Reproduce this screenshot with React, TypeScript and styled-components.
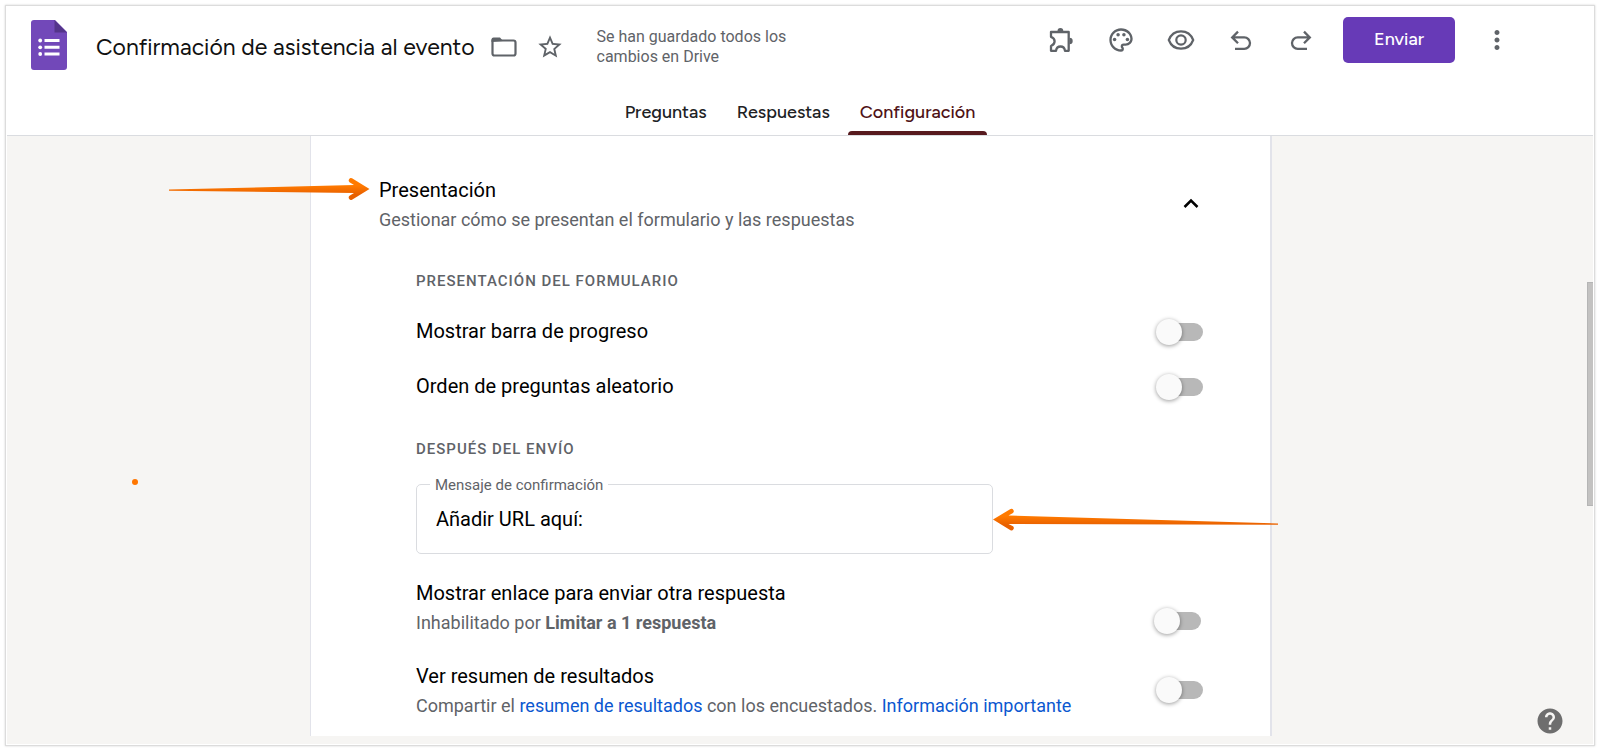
import React, { useId } from "react";
import styled, { createGlobalStyle } from "styled-components";
import { MdMoreVert, MdStarBorder, MdHelp } from "react-icons/md";

const GlobalStyle = createGlobalStyle`
  *, *::before, *::after { box-sizing: border-box; }
  html { background: #fff; }
  body {
    margin: 0;
    background: #fff;
    font-family: Roboto, "Liberation Sans", sans-serif;
    color: #000;
  }
  button { font: inherit; cursor: pointer; }
`;

const display = `Figtree, Inter, "Open Sans", sans-serif`;

const Page = styled.div`
  display: flex;
  min-height: 100vh;
  padding: 5px;
`;

const Frame = styled.div`
  position: relative;
  display: flex;
  flex-direction: column;
  flex: 1;
  min-width: 0;
  padding: 0 1px 1px;
  background: #fff;
  border: 1px solid #dcdcdc;
  box-shadow: 0 0 2px rgba(0, 0, 0, 0.18);
`;

const Header = styled.header`
  display: flex;
  flex-direction: column;
  border-bottom: 1px solid #dadce0;
`;

const TopBar = styled.div`
  display: flex;
  align-items: flex-start;
  justify-content: space-between;
  padding: 11px 66px 0 23px;
  height: 84px;
`;

const Brand = styled.div`
  display: flex;
  align-items: center;
  height: 60px;
`;

const Title = styled.h1`
  margin: 0 0 0 28px;
  font: 400 23px/32px ${display};
  color: #111;
  white-space: nowrap;
`;

const IconButton = styled.button<{ $size?: number }>`
  display: flex;
  align-items: center;
  justify-content: center;
  flex: none;
  width: ${(p) => p.$size ?? 60}px;
  height: 46px;
  padding: 0;
  border: 0;
  background: none;
  color: #5f6368;
`;

const FileActions = styled.div`
  display: flex;
  align-items: center;
  margin: 0 24px 0 6px;
`;

const Status = styled.p`
  width: 210px;
  margin: 0;
  font-size: 16px;
  line-height: 20px;
  color: #5f6368;
`;

const Tools = styled.div`
  display: flex;
  align-items: center;
`;

const SendButton = styled.button`
  width: 112px;
  height: 46px;
  margin: 0 12px;
  padding: 0 0 2px;
  border: 0;
  border-radius: 5px;
  background: #673ab7;
  color: #fff;
  font: 500 18px/24px ${display};
`;

const Tabs = styled.nav`
  display: flex;
  justify-content: center;
  height: 45px;
`;

const Tab = styled.button<{ $active?: boolean }>`
  display: flex;
  flex-direction: column;
  justify-content: space-between;
  align-items: stretch;
  padding: 0 15px;
  border: 0;
  background: none;
  color: ${(p) => (p.$active ? "#4f1216" : "#202124")};
  font: 500 18px/44px ${display};

  &::after {
    content: "";
    flex: none;
    height: 4px;
    margin: -4px -12px 0;
    border-radius: 4px 4px 0 0;
    background: ${(p) => (p.$active ? "#571a1e" : "transparent")};
  }
`;

const Workspace = styled.main`
  position: relative;
  flex: 1;
  display: flex;
  justify-content: center;
  padding: 0 18px 8px 0;
  background: #f6f5f3;
`;

const Card = styled.section`
  width: 100%;
  max-width: 962px;
  padding: 39px 67px 0 68px;
  background: #fff;
  border: solid #dadce0;
  border-color: #dadce0 #e2e3ea;
  border-width: 0 2px 0 1px;
`;

const GroupHeader = styled.div`
  display: flex;
  align-items: center;
  justify-content: space-between;
`;

const Anchor = styled.div`
  position: relative;
`;

const Heading = styled.h2`
  margin: 0;
  padding-bottom: 2px;
  font-size: 20px;
  font-weight: 400;
  line-height: 30px;
`;

const Hint = styled.p`
  margin: 0;
  font-size: 18px;
  line-height: 26px;
  color: #5f6368;

  a { color: #0b57d0; text-decoration: none; }
`;

const Settings = styled.div`
  padding-left: 37px;
`;

const Overline = styled.h3<{ $top: number }>`
  margin: ${(p) => p.$top}px 0 0;
  font-size: 15px;
  font-weight: 500;
  line-height: 24px;
  letter-spacing: 1px;
  text-transform: uppercase;
  color: #5f6368;
`;

const Row = styled.div<{ $top?: number; $low?: boolean }>`
  display: flex;
  align-items: ${(p) => (p.$low ? "flex-end" : "center")};
  justify-content: space-between;
  min-height: 55px;
  margin-top: ${(p) => p.$top ?? 0}px;
`;

const RowLabel = styled.label`
  display: block;
  padding-bottom: 2px;
  font-size: 20px;
  line-height: 30px;
`;

const Switch = styled.input.attrs({ type: "checkbox", role: "switch" })`
  appearance: none;
  position: relative;
  flex: none;
  width: 47px;
  height: 26px;
  margin: 0;

  &::before {
    content: "";
    position: absolute;
    inset: 4px 0 4px 6px;
    border-radius: 9px;
    background: #b8b8b8;
  }

  &::after {
    content: "";
    position: absolute;
    left: 0;
    top: 0;
    width: 26px;
    height: 26px;
    border-radius: 50%;
    background: #fafafa;
    box-shadow: 0 1px 4px rgba(0, 0, 0, 0.4);
  }

  &:checked::after { left: 21px; }
  &:disabled { margin: 0 2px 2px 0; }
`;

const Field = styled.div`
  position: relative;
  width: 577px;
  max-width: 100%;
  margin-top: 23px;
`;

const FieldLabel = styled.label`
  position: absolute;
  top: -9px;
  left: 14px;
  padding: 0 5px;
  background: #fff;
  font-size: 15px;
  line-height: 20px;
  color: #5f6368;
`;

const FieldInput = styled.input`
  display: block;
  width: 100%;
  height: 70px;
  padding: 0 19px;
  border: 1px solid #dadce0;
  border-radius: 5px;
  background: transparent;
  color: #000;
  font: 400 20px/30px Roboto, sans-serif;
`;

const ArrowRight = styled.svg`
  position: absolute;
  top: 2px;
  right: 100%;
  margin-right: 9px;
`;

const ArrowLeft = styled.svg`
  position: absolute;
  top: 24px;
  left: 100%;
`;

const Dot = styled.span`
  position: absolute;
  top: 343px;
  left: 125px;
  width: 6px;
  height: 6px;
  border-radius: 50%;
  background: #ff7600;
`;

const ScrollThumb = styled.div`
  position: absolute;
  top: 146px;
  right: 0;
  width: 6px;
  height: 224px;
  background: #c3c2c1;
  border: solid #b5b5b5;
  border-width: 1px 0 1px 1px;
`;

const HelpButton = styled.button`
  position: absolute;
  right: 28px;
  bottom: 8px;
  display: flex;
  padding: 0;
  border: 0;
  background: none;
  color: #6e6e6e;
`;

const LogoDrawing = styled.svg`
  flex: none;
  align-self: flex-start;
  margin-top: 3px;
`;

const Logo = () => (
  <LogoDrawing width="38" height="50" viewBox="0 0 38 50" aria-hidden="true">
    <path d="M3 0h22l12 12v35a3 3 0 0 1-3 3H4a3 3 0 0 1-3-3V3a3 3 0 0 1 3-3z" fill="#7248b9" />
    <path d="M24.500 0L37 12.500H24.500z" fill="#54348a" />
    <g fill="#fff">
      <circle cx="10.200" cy="20.500" r="1.900" />
      <circle cx="10.200" cy="27.300" r="1.900" />
      <circle cx="10.200" cy="34" r="1.900" />
      <path d="M14.500 19h15v3h-15zM14.500 25.800h15v3h-15zM14.500 32.500h15v3h-15z" />
    </g>
  </LogoDrawing>
);

const FolderIcon = () => (
  <svg width="26" height="20" viewBox="0 0 26 20" fill="none" aria-hidden="true">
    <path d="M1.500 3.500v13a2 2 0 0 0 2 2h19a2 2 0 0 0 2-2v-11a2 2 0 0 0-2-2z" stroke="currentColor" strokeWidth="2.200" />
    <path d="M.5 5V2.500a2 2 0 0 1 2-2H9L12 4z" fill="currentColor" />
  </svg>
);

const PuzzleIcon = () => (
  <svg width="28" height="28" viewBox="0 0 28 28" fill="none" aria-hidden="true">
    <path
      d="M4 6H21.700V24.800H18C17.600 22 16 20.500 13.500 20.500S9.400 22 9 24.800H4V20C6.300 19 7.600 17.500 7.600 15.200S6.300 11.600 4 10.800Z"
      stroke="currentColor" strokeWidth="2.300" strokeLinejoin="round"
    />
    <path d="M10.500 5a2.900 2.900 0 0 1 5.800 0zM22.500 11.800a3.200 3.200 0 0 1 0 6.400z" fill="currentColor" />
  </svg>
);

const PaletteIcon = () => (
  <svg width="28" height="28" viewBox="0 0 24 24" fill="currentColor" aria-hidden="true">
    <path d="M12 22C6.490 22 2 17.510 2 12S6.490 2 12 2s10 4.040 10 9c0 3.310-2.690 6-6 6h-1.770c-.28 0-.5.220-.5.500 0 .120.050.230.130.330.410.470.640 1.060.640 1.670A2.500 2.500 0 0 1 12 22zm0-18c-4.410 0-8 3.590-8 8s3.590 8 8 8c.28 0 .5-.220.500-.5a.54.540 0 0 0-.14-.35c-.41-.46-.63-1.050-.63-1.650a2.500 2.500 0 0 1 2.500-2.500H16c2.210 0 4-1.790 4-4 0-3.860-3.590-7-8-7z" />
    <circle cx="6.500" cy="11.500" r="1.500" />
    <circle cx="9.500" cy="7.500" r="1.500" />
    <circle cx="14.500" cy="7.500" r="1.500" />
    <circle cx="17.500" cy="11.500" r="1.500" />
  </svg>
);

const EyeIcon = () => (
  <svg width="28" height="28" viewBox="0 0 28 28" fill="none" stroke="currentColor" strokeWidth="2.200" aria-hidden="true">
    <path d="M1.800 14C4 8.200 8.600 5.300 14 5.300S24 8.200 26.200 14C24 19.800 19.400 22.700 14 22.700S4 19.800 1.800 14Z" />
    <circle cx="14" cy="14" r="4.700" />
  </svg>
);

const UndoIcon = ({ flip = false }: { flip?: boolean }) => (
  <svg width="28" height="28" viewBox="0 0 28 28" fill="none" stroke="currentColor" strokeWidth="2.300" aria-hidden="true">
    <g transform={flip ? "matrix(-1 0 0 1 28 0)" : undefined}>
      <path d="M8 22.800H17.300a5.700 5.700 0 0 0 0-11.400H6M11 5.600L5.200 11.400L11 17.200" />
    </g>
  </svg>
);

const ChevronIcon = () => (
  <svg width="16" height="12" viewBox="0 0 16 12" fill="none" aria-hidden="true">
    <path d="M1.500 9L8 2.500L14.500 9" stroke="#000" strokeWidth="2.500" />
  </svg>
);

const ArrowPaint = ({ id }: { id: string }) => (
  <defs>
    <linearGradient id={id} x1="0" y1="0" x2="0" y2="1">
      <stop offset="0.350" stopColor="#ff7a00" />
      <stop offset="0.750" stopColor="#e86000" />
    </linearGradient>
  </defs>
);

function Setting({ title, children, top, disabled }: {
  title: string; children?: React.ReactNode; top?: number; disabled?: boolean;
}) {
  const id = useId();
  return (
    <Row $top={top} $low={disabled}>
      <div>
        <RowLabel htmlFor={id}>{title}</RowLabel>
        {children && <Hint>{children}</Hint>}
      </div>
      <Switch id={id} disabled={disabled} />
    </Row>
  );
}

export default function App() {
  return (
    <Page>
      <GlobalStyle />
      <Frame>
        <Header>
          <TopBar>
            <Brand>
              <Logo />
              <Title>Confirmación de asistencia al evento</Title>
              <FileActions>
                <IconButton $size={46} aria-label="Mover a carpeta"><FolderIcon /></IconButton>
                <IconButton $size={46} aria-label="Destacar"><MdStarBorder size={28} /></IconButton>
              </FileActions>
              <Status>Se han guardado todos los cambios en Drive</Status>
            </Brand>
            <Tools>
              <IconButton aria-label="Complementos"><PuzzleIcon /></IconButton>
              <IconButton aria-label="Personalizar tema"><PaletteIcon /></IconButton>
              <IconButton aria-label="Vista previa"><EyeIcon /></IconButton>
              <IconButton aria-label="Deshacer"><UndoIcon /></IconButton>
              <IconButton aria-label="Rehacer"><UndoIcon flip /></IconButton>
              <SendButton>Enviar</SendButton>
              <IconButton aria-label="Más"><MdMoreVert size={30} /></IconButton>
            </Tools>
          </TopBar>
          <Tabs>
            <Tab>Preguntas</Tab>
            <Tab>Respuestas</Tab>
            <Tab $active aria-current="page">Configuración</Tab>
          </Tabs>
        </Header>
        <Workspace>
          <Card>
            <GroupHeader>
              <Anchor>
                <Heading>Presentación</Heading>
                <Hint>Gestionar cómo se presentan el formulario y las respuestas</Hint>
                <ArrowRight width="201" height="24" viewBox="0 0 201 24" aria-hidden="true">
                  <ArrowPaint id="arrow-right" />
                  <path d="M0 12.500L185 8L180.500 5.300A2.400 2.400 0 0 1 183 1.300L200.500 12L183 22.700A2.400 2.400 0 0 1 180.500 18.700L185 16L0 13.700Z" fill="url(#arrow-right)" />
                </ArrowRight>
              </Anchor>
              <IconButton $size={24} aria-label="Contraer"><ChevronIcon /></IconButton>
            </GroupHeader>
            <Settings>
              <Overline $top={36}>Presentación del formulario</Overline>
              <Setting title="Mostrar barra de progreso" top={11} />
              <Setting title="Orden de preguntas aleatorio" />
              <Overline $top={23}>Después del envío</Overline>
              <Field>
                <FieldInput id="confirmation" defaultValue="Añadir URL aquí:" />
                <FieldLabel htmlFor="confirmation">Mensaje de confirmación</FieldLabel>
                <ArrowLeft width="286" height="24" viewBox="0 0 286 24" aria-hidden="true">
                  <ArrowPaint id="arrow-left" />
                  <path d="M285 15.500L15.500 7.500L20 5A2.400 2.400 0 0 0 17.500 1L0 11.500L17.500 22.200A2.400 2.400 0 0 0 20 18.200L15.500 16L285 16.800Z" fill="url(#arrow-left)" />
                </ArrowLeft>
              </Field>
              <Setting title="Mostrar enlace para enviar otra respuesta" top={24} disabled>
                Inhabilitado por <b>Limitar a 1 respuesta</b>
              </Setting>
              <Setting title="Ver resumen de resultados" top={25}>
                Compartir el <a href="#resumen">resumen de resultados</a> con los encuestados.{" "}
                <a href="#informacion">Información importante</a>
              </Setting>
            </Settings>
          </Card>
          <Dot />
          <ScrollThumb />
          <HelpButton aria-label="Ayuda"><MdHelp size={30} /></HelpButton>
        </Workspace>
      </Frame>
    </Page>
  );
}
